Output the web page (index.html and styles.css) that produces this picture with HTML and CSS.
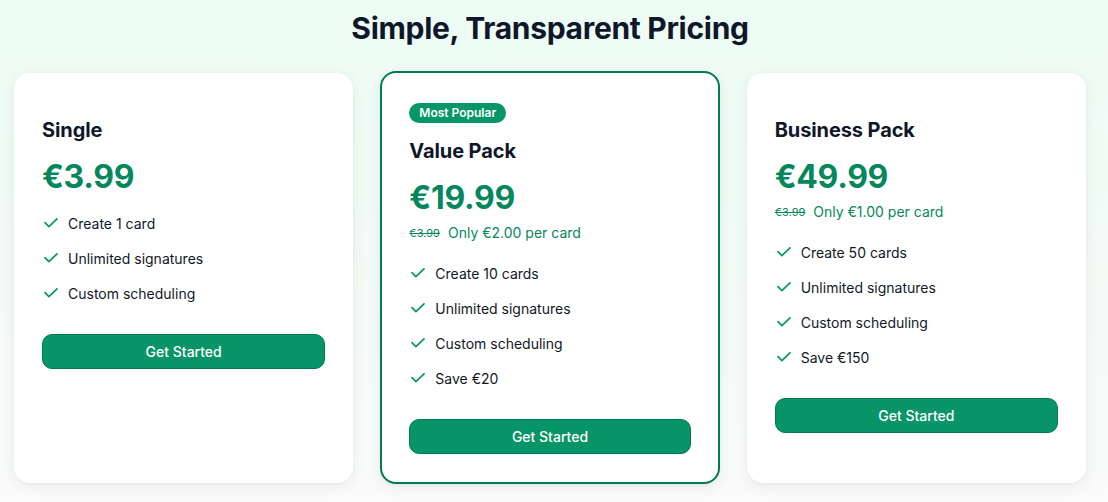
FILE: index.html
```html
<!DOCTYPE html>
<html lang="en">
<head>
<meta charset="utf-8">
<title>Pricing</title>
<link rel="stylesheet" href="styles.css">
</head>
<body>
<main class="page">
  <h1 class="title">Simple, Transparent Pricing</h1>
  <section class="plans">
    <article class="card">
      <h2 class="plan-name">Single</h2>
      <div class="price">€3.99</div>
      <ul class="features">
        <li><svg class="check" viewBox="0 0 14 10"><path d="M1 4.6 L4.9 8.6 L13 0.8"/></svg>Create 1 card</li>
        <li><svg class="check" viewBox="0 0 14 10"><path d="M1 4.6 L4.9 8.6 L13 0.8"/></svg>Unlimited signatures</li>
        <li><svg class="check" viewBox="0 0 14 10"><path d="M1 4.6 L4.9 8.6 L13 0.8"/></svg>Custom scheduling</li>
      </ul>
      <button class="cta">Get Started</button>
    </article>
    <article class="card featured">
      <span class="badge">Most Popular</span>
      <h2 class="plan-name">Value Pack</h2>
      <div class="price">€19.99</div>
      <div class="sub"><s class="old">€3.99</s>Only €2.00 per card</div>
      <ul class="features">
        <li><svg class="check" viewBox="0 0 14 10"><path d="M1 4.6 L4.9 8.6 L13 0.8"/></svg>Create 10 cards</li>
        <li><svg class="check" viewBox="0 0 14 10"><path d="M1 4.6 L4.9 8.6 L13 0.8"/></svg>Unlimited signatures</li>
        <li><svg class="check" viewBox="0 0 14 10"><path d="M1 4.6 L4.9 8.6 L13 0.8"/></svg>Custom scheduling</li>
        <li><svg class="check" viewBox="0 0 14 10"><path d="M1 4.6 L4.9 8.6 L13 0.8"/></svg>Save €20</li>
      </ul>
      <button class="cta">Get Started</button>
    </article>
    <article class="card">
      <h2 class="plan-name">Business Pack</h2>
      <div class="price">€49.99</div>
      <div class="sub"><s class="old">€3.99</s>Only €1.00 per card</div>
      <ul class="features">
        <li><svg class="check" viewBox="0 0 14 10"><path d="M1 4.6 L4.9 8.6 L13 0.8"/></svg>Create 50 cards</li>
        <li><svg class="check" viewBox="0 0 14 10"><path d="M1 4.6 L4.9 8.6 L13 0.8"/></svg>Unlimited signatures</li>
        <li><svg class="check" viewBox="0 0 14 10"><path d="M1 4.6 L4.9 8.6 L13 0.8"/></svg>Custom scheduling</li>
        <li><svg class="check" viewBox="0 0 14 10"><path d="M1 4.6 L4.9 8.6 L13 0.8"/></svg>Save €150</li>
      </ul>
      <button class="cta">Get Started</button>
    </article>
  </section>
</main>
</body>
</html>
```
FILE: styles.css
```css
* { box-sizing: border-box; }
html, body { margin: 0; height: 100%; }
body {
  font-family: Inter, "Noto Sans", sans-serif;
  background: linear-gradient(to bottom, #edfcf5 0%, #f3fbf7 55%, #fafbfa 100%);
  color: #111827;
  overflow: hidden;
}
.page {
  padding: 10px 22px 0 14px;
}
.title {
  margin: 0;
  text-align: center;
  font-size: 30px;
  line-height: 36px;
  font-weight: 700;
  letter-spacing: -0.3px;
  color: #0f172a;
}
.plans {
  margin-top: 27px;
  display: grid;
  grid-template-columns: repeat(3, 1fr);
  column-gap: 27px;
  align-items: stretch;
}
.card {
  background: #fff;
  border-radius: 16px;
  padding: 28px;
  display: flex;
  flex-direction: column;
  align-items: flex-start;
  box-shadow: 0 4px 14px rgba(15, 40, 30, 0.07), 0 1px 3px rgba(0, 0, 0, 0.04);
}
.card.featured {
  border: 2px solid #047857;
  margin: -2px 0 -1px;
  padding: 30px 27px 28px;
}
.badge {
  display: inline-block;
  height: 20px;
  line-height: 20px;
  padding: 0 10px;
  border-radius: 999px;
  background: #059669;
  color: #fff;
  font-size: 12px;
  font-weight: 600;
}
.plan-name {
  margin: 15px 0 0;
  font-size: 20px;
  line-height: 28px;
  font-weight: 700;
  color: #0f172a;
  letter-spacing: -0.1px;
}
.featured .plan-name { margin-top: 14px; }
.price {
  margin-top: 13px;
  font-size: 32px;
  line-height: 40px;
  font-weight: 700;
  color: #05875c;
  letter-spacing: -0.3px;
}
.sub {
  margin-top: 5px;
  margin-bottom: 4px;
  font-size: 14px;
  line-height: 20px;
  color: #05875c;
  display: flex;
  align-items: center;
}
.old {
  font-size: 11px;
  margin-right: 8px;
  color: #05875c;
}
.features {
  list-style: none;
  margin: 17px 0 0;
  padding: 0;
  display: flex;
  flex-direction: column;
  gap: 15px;
}
.features li {
  display: flex;
  align-items: center;
  font-size: 14px;
  line-height: 20px;
  color: #111827;
}
.check {
  width: 14px;
  height: 10px;
  margin: 0 10px 3px 2px;
  fill: none;
  stroke: #059669;
  stroke-width: 1.7;
  stroke-linecap: round;
  stroke-linejoin: round;
  flex: none;
}
.cta {
  margin-top: 30px;
  width: 100%;
  height: 35px;
  border: 1px solid #047857;
  border-radius: 10px;
  background: #079466;
  color: #fff;
  font-family: Inter, "Noto Sans", sans-serif;
  font-size: 14px;
  font-weight: 500;
  cursor: pointer;
}
```
